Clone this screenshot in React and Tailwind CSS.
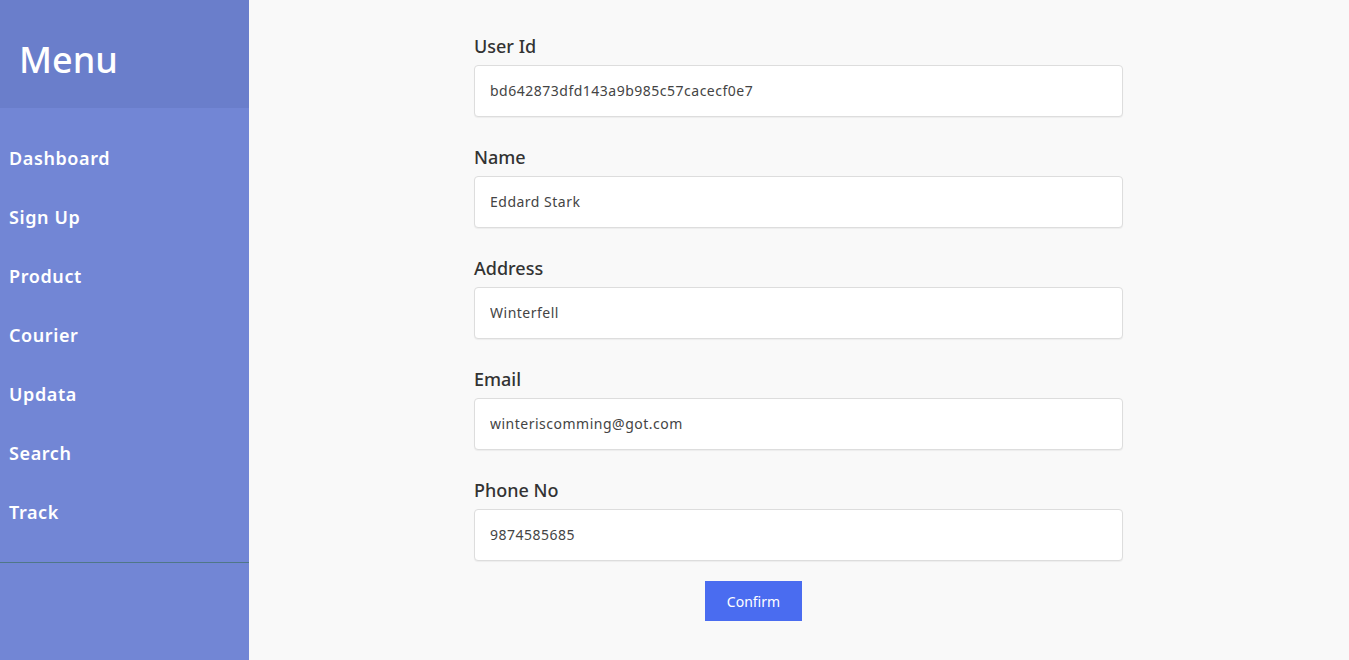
const NAV = ["Dashboard", "Sign Up", "Product", "Courier", "Updata", "Search", "Track"];

const FIELDS = [
  { label: "User Id", value: "bd642873dfd143a9b985c57cacecf0e7" },
  { label: "Name", value: "Eddard Stark" },
  { label: "Address", value: "Winterfell" },
  { label: "Email", value: "winteriscomming@got.com" },
  { label: "Phone No", value: "9874585685" },
];

export default function App() {
  return (
    <div className="flex h-[660px] w-full font-['Noto_Sans',sans-serif]">
      <aside className="flex w-[249px] shrink-0 flex-col bg-[#7286d5]">
        <div className="flex h-[108px] items-center bg-[#6a7ecb] pl-[19px] pt-[12px]">
          <h1 className="text-[36px] font-medium leading-none text-white">Menu</h1>
        </div>
        <nav className="pt-[21px]">
          {NAV.map((item) => (
            <a
              key={item}
              href="#"
              className="flex h-[59px] items-center pl-[9px] text-[18px] font-semibold tracking-[0.6px] text-white"
            >
              {item}
            </a>
          ))}
        </nav>
        <div className="mt-[20px] border-t border-[#4f7788]" />
      </aside>

      <main className="flex-1 bg-[#f9f9f9]">
        <form className="ml-[225px] w-[649px] pt-[33px]" onSubmit={(e) => e.preventDefault()}>
          {FIELDS.map((f, i) => (
            <div key={f.label} className={i < FIELDS.length - 1 ? "mb-[27px]" : ""}>
              <label className="mb-[5px] block text-[18px] font-medium leading-[27px] text-[#333]">
                {f.label}
              </label>
              <input
                readOnly
                value={f.value}
                className="block h-[52px] w-full rounded-[4px] border border-[#dddddd] bg-white px-[15px] pb-[2px] text-[14px] tracking-[0.5px] text-[#444] shadow-[0_1px_1px_rgba(0,0,0,0.05)] outline-none"
              />
            </div>
          ))}
          <button
            type="submit"
            className="ml-[231px] mt-[20px] h-[40px] w-[97px] bg-[#4a6cf0] text-[14px] text-white"
          >
            Confirm
          </button>
        </form>
      </main>
    </div>
  );
}
